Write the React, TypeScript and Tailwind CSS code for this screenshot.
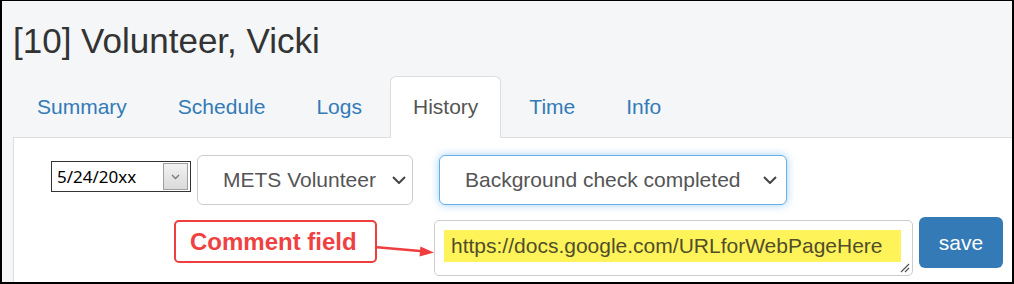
const tabs = ['Summary', 'Schedule', 'Logs', 'History', 'Time', 'Info']

const Chevron = ({ className = '' }: { className?: string }) => (
  <svg width="14" height="8" viewBox="0 0 14 8" className={className}>
    <path d="M1 1 L7 7 L13 1" fill="none" stroke="#444" strokeWidth="2" />
  </svg>
)

const FakeSelect = ({ label, width, focused }: { label: string; width: string; focused?: boolean }) => (
  <div
    className={`flex h-[50px] items-center justify-between rounded-[6px] border bg-white pl-[25px] pr-[6px] text-[21px] text-[#555] ${width} ${
      focused ? 'border-[#66afe9] shadow-[0_0_8px_rgba(102,175,233,0.6)]' : 'border-[#ccc]'
    }`}
  >
    <span>{label}</span>
    <Chevron />
  </div>
)

export default function App() {
  return (
    <div className="flex h-[284px] w-[1014px] flex-col overflow-hidden border-2 border-t border-black bg-[#f4f6f8] font-['Liberation_Sans',Arial,sans-serif]">
      <h1 className="mt-[22px] h-[35px] pl-[11px] text-[35px] leading-[35px] text-[#333]">[10] Volunteer, Vicki</h1>

      <div className="ml-[11px] mt-[18px] flex flex-1 flex-col">
        <ul className="flex border-b border-[#ddd]">
          {tabs.map((t, i) => {
            const active = t === 'History'
            return (
              <li
                key={t}
                className={`-mb-px mr-[5px] flex h-[62px] items-center rounded-t-[6px] border px-[22px] text-[21px] ${
                  i === 0 ? 'ml-[1px]' : ''
                } ${active ? 'border-[#ddd] border-b-white bg-white text-[#555]' : 'border-transparent text-[#337ab7]'}`}
              >
                {t}
              </li>
            )
          })}
        </ul>

        <div className="flex-1 border-l border-[#ddd] bg-white pl-[37px] pt-[17px]">
          {/* row 1: date and selects */}
          <div className="flex items-start">
            <div className="mt-[6px] flex h-[31px] w-[140px] items-center justify-between border border-[#333] bg-white pl-[5px] pr-[2px] font-['Noto_Sans',sans-serif] text-[17px] text-black">
              <span>5/24/20xx</span>
              <div className="flex h-[27px] w-[25px] items-center justify-center border border-[#a0a0a0] bg-gradient-to-b from-[#f2f2f2] to-[#dadada]">
                <svg width="9" height="6" viewBox="0 0 9 6">
                  <path d="M1 1 L4.5 4.5 L8 1" fill="none" stroke="#777" strokeWidth="1.3" />
                </svg>
              </div>
            </div>
            <div className="ml-[6px]">
              <FakeSelect label="METS Volunteer" width="w-[216px]" />
            </div>
            <div className="ml-[26px]">
              <FakeSelect label="Background check completed" width="w-[348px] pr-[9px]" focused />
            </div>
          </div>

          {/* row 2: callout, comment field, save */}
          <div className="ml-[123px] mt-[12px] flex items-start">
            <div className="mt-[3px] flex h-[43px] w-[203px] items-center rounded-[5px] border-2 border-[#ef3e3e] bg-white pl-[14px] text-[24px] font-bold text-[#ef4141]">
              Comment field
            </div>
            <svg width="57" height="43" viewBox="0 0 57 43" className="mt-[3px]">
              <line x1="0" y1="27.3" x2="46" y2="31.3" stroke="#ef3e3e" strokeWidth="2.5" />
              <polygon points="57,32.4 43.4,26.6 42.6,36.6" fill="#ef3e3e" />
            </svg>
            <div className="relative mt-[3px] h-[56px] w-[479px] rounded-[5px] border border-[#ccc] bg-white pl-[9px] pt-[9px]">
              <div className="flex h-[32px] w-[457px] items-center bg-[#fff35a] pl-[7px] text-[21px] text-[#514e2a]">
                https://docs.google.com/URLforWebPageHere
              </div>
              <svg width="10" height="10" viewBox="0 0 10 10" className="absolute bottom-[2px] right-[2px]">
                <path d="M9 1 L1 9 M9 5 L5 9" stroke="#555" strokeWidth="1.2" />
              </svg>
            </div>
            <button className="ml-[6px] flex h-[51px] w-[84px] items-center justify-center rounded-[6px] bg-[#337ab7] text-[21px] text-white">
              save
            </button>
          </div>
        </div>
      </div>
    </div>
  )
}
